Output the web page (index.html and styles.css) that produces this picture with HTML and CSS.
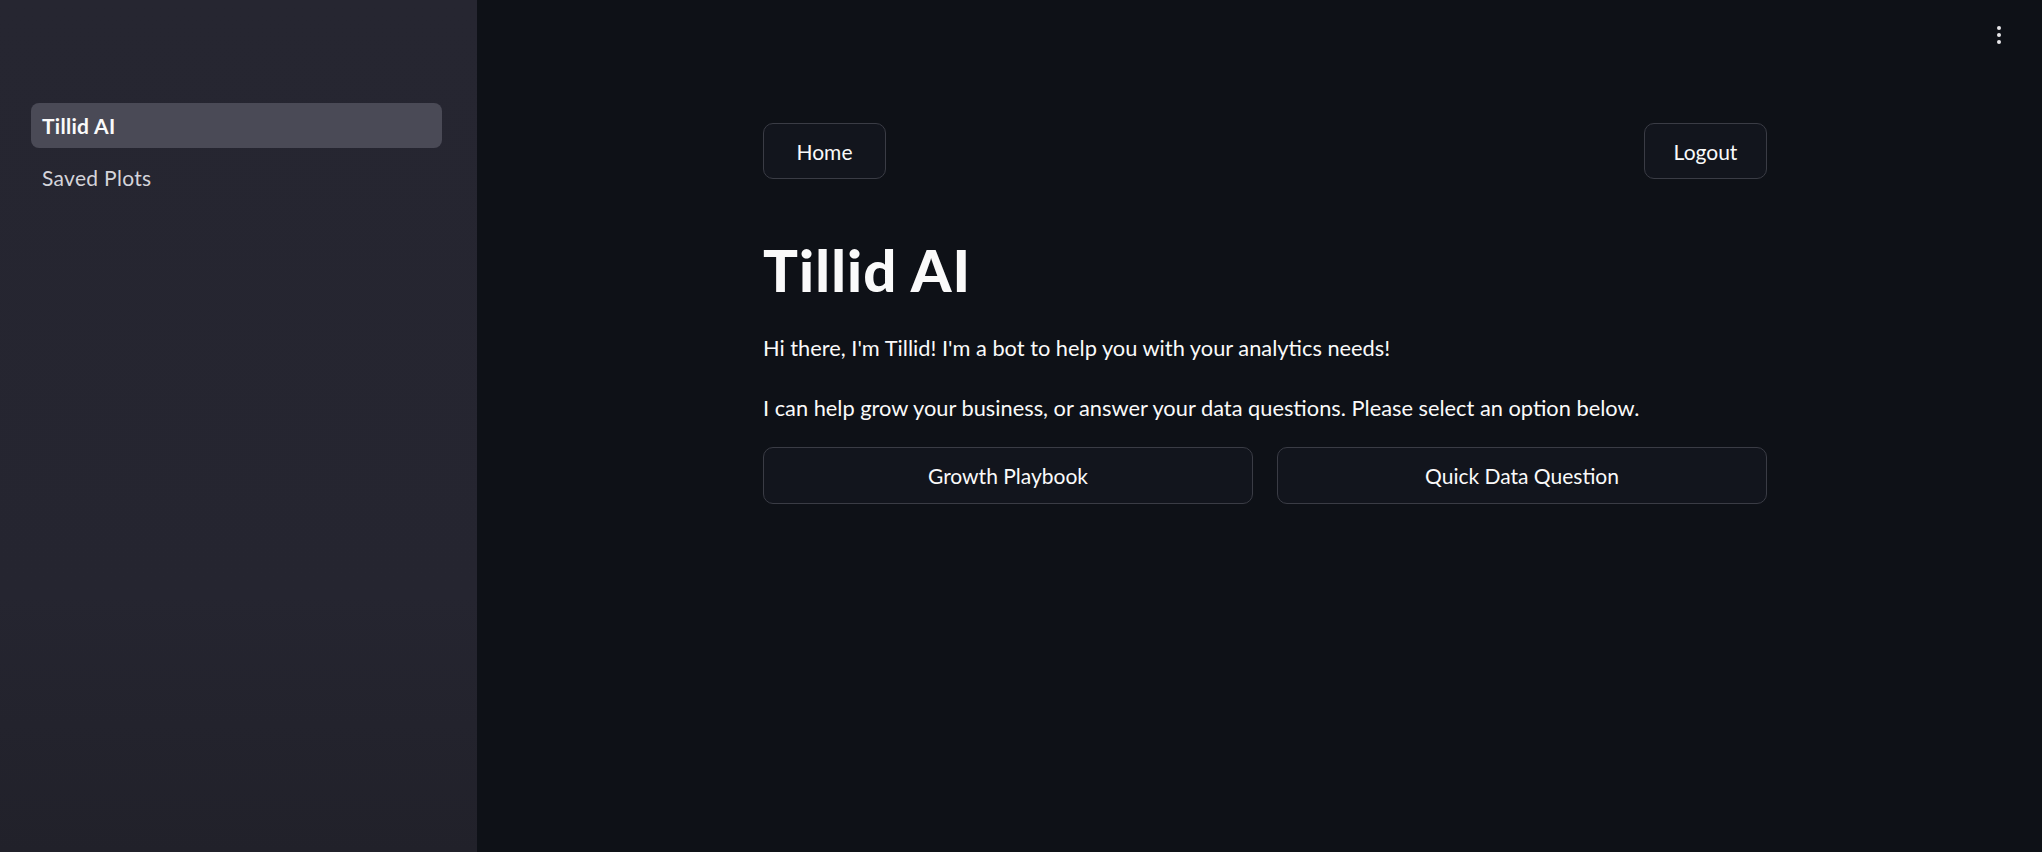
FILE: index.html
```html
<!DOCTYPE html>
<html lang="en">
  <head>
    <meta charset="UTF-8" />
    <meta name="viewport" content="width=device-width, initial-scale=1.0" />
    <title>Tillid AI</title>
    <link rel="stylesheet" href="styles.css">
  </head>
  <body>
    <aside class="sidebar">
      <nav class="nav">
        <a href="#" class="nav-item active">Tillid AI</a>
        <a href="#" class="nav-item">Saved Plots</a>
      </nav>
    </aside>

    <main class="main">
      <button class="menu-btn" aria-label="Main menu">
        <span></span><span></span><span></span>
      </button>

      <div class="content">
        <div class="topbar">
          <button class="btn small">Home</button>
          <button class="btn small">Logout</button>
        </div>

        <h1 class="title">Tillid AI</h1>
        <p class="text">Hi there, I'm Tillid! I'm a bot to help you with your analytics needs!</p>
        <p class="text">I can help grow your business, or answer your data questions. Please select an option below.</p>

        <div class="choices">
          <button class="btn wide">Growth Playbook</button>
          <button class="btn wide">Quick Data Question</button>
        </div>
      </div>
    </main>
  </body>
</html>
```

FILE: styles.css
```css
html,
body {
  height: 100%;
}

body {
  margin: 0;
  display: flex;
  background: #0e1117;
  color: #fafafa;
  font-family: Lato, "Liberation Sans", sans-serif;
  overflow: hidden;
}

/* sidebar */
.sidebar {
  width: 477px;
  flex-shrink: 0;
  background: linear-gradient(to bottom, #262631 0%, #252530 70%, #21212a 100%);
  padding-top: 103px;
  box-sizing: border-box;
}

.nav {
  display: flex;
  flex-direction: column;
  gap: 7px;
  padding: 0 35px 0 31px;
}

.nav-item {
  display: block;
  height: 45px;
  line-height: 45px;
  padding-left: 11px;
  border-radius: 8px;
  font-size: 21px;
  letter-spacing: 0.3px;
  color: #d4d4da;
  text-decoration: none;
}

.nav-item.active {
  background: #4a4a56;
  color: #fafafa;
  font-weight: 700;
}

/* main area */
.main {
  flex: 1;
  position: relative;
  padding: 123px 0 0 286px;
}

.menu-btn {
  position: absolute;
  top: 26px;
  right: 41px;
  display: flex;
  flex-direction: column;
  gap: 3px;
  padding: 0;
  background: none;
  border: 0;
}

.menu-btn span {
  width: 4px;
  height: 4px;
  border-radius: 50%;
  background: #e8e8ea;
}

.content {
  width: 1004px;
}

.topbar {
  display: flex;
  justify-content: space-between;
}

.btn {
  height: 56px;
  background: #12151d;
  border: 1px solid #3a3c45;
  border-radius: 10px;
  color: #fafafa;
  font-family: inherit;
  font-size: 21px;
  cursor: pointer;
}

.btn.small {
  width: 123px;
}

.title {
  margin: 57px 0 0;
  font-size: 58px;
  line-height: 68px;
  font-weight: 900;
  letter-spacing: 1.2px;
}

.text {
  margin: 28px 0 0;
  font-size: 21.8px;
  line-height: 32px;
}

.choices {
  display: grid;
  grid-template-columns: 1fr 1fr;
  gap: 24px;
  margin-top: 23px;
}

.btn.wide {
  height: 57px;
}
```
